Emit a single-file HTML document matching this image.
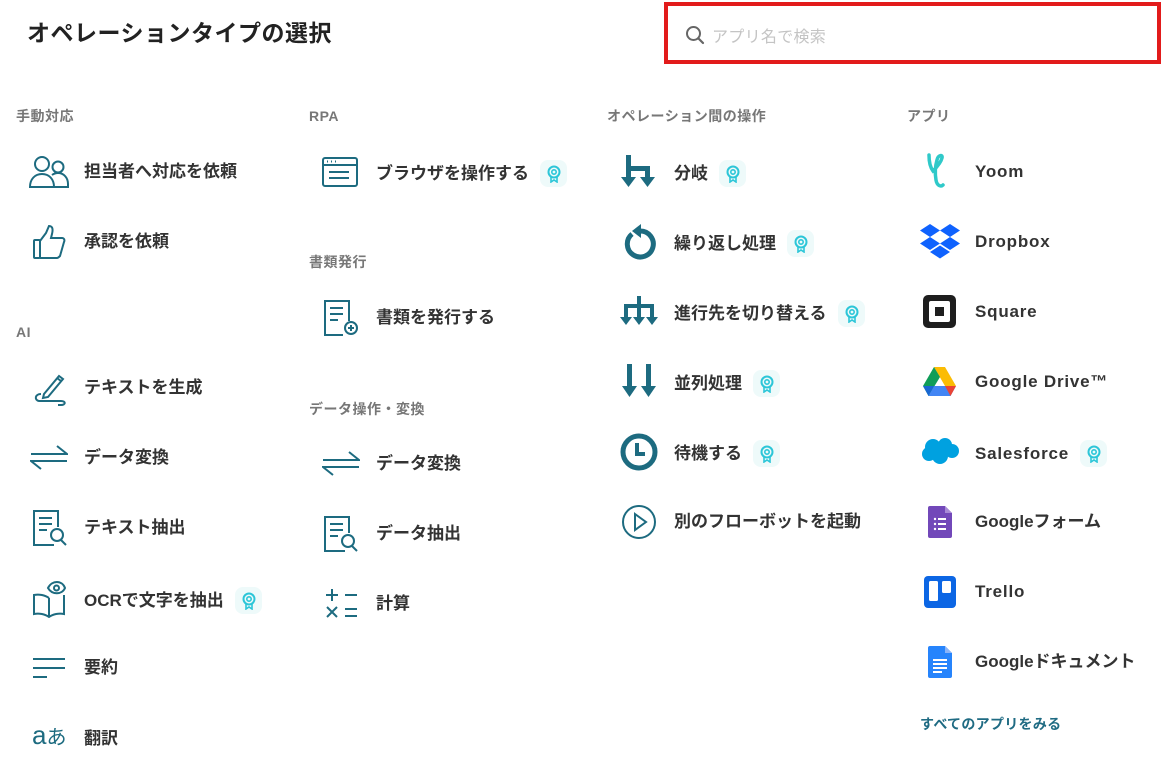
<!DOCTYPE html>
<html><head><meta charset="utf-8">
<style>
*{margin:0;padding:0;box-sizing:border-box}
body{width:1174px;height:772px;background:#fff;position:relative;overflow:hidden;font-family:"Liberation Sans","Noto Sans CJK JP",sans-serif;color:#333}
.t{position:absolute;left:27px;top:17px;font-size:23px;font-weight:bold;color:#222;line-height:32px;letter-spacing:0.5px}
.search{position:absolute;left:664px;top:2px;width:497px;height:62px;border:4px solid #e21b1b;background:#fff}
.search .ph{position:absolute;left:44px;top:17px;font-size:16px;color:#c4c4c4;letter-spacing:0.3px}
.h{position:absolute;font-size:14px;font-weight:bold;color:#777;letter-spacing:0.5px;line-height:20px}
.it{position:absolute;font-size:17px;font-weight:bold;color:#333;letter-spacing:0;line-height:24px;white-space:nowrap;display:flex;align-items:center}
.it.l{letter-spacing:0.8px}
.ic{position:absolute}
.b{display:inline-block;width:27px;height:27px;border-radius:8px;background:#eefafa;margin-left:11px;position:relative}
.b svg{position:absolute;left:6px;top:5px}
.lk{position:absolute;left:920px;top:714px;font-size:14px;font-weight:bold;color:#1f6b83;letter-spacing:0.3px}
</style></head><body>
<div class="t">オペレーションタイプの選択</div>
<div class="search">
<svg style="position:absolute;left:17px;top:19px" width="20" height="20" viewBox="0 0 20 20"><circle cx="8.5" cy="8.5" r="6.5" fill="none" stroke="#666" stroke-width="2"/><line x1="13.5" y1="13.5" x2="18" y2="18" stroke="#666" stroke-width="2.2" stroke-linecap="round"/></svg>
<div class="ph">アプリ名で検索</div></div>

<svg width="0" height="0" style="position:absolute"><defs>
<symbol id="bd" viewBox="0 0 16 18"><circle cx="8" cy="7" r="5.5" fill="none" stroke="#2cc6d8" stroke-width="2"/><circle cx="8" cy="7" r="2.2" fill="none" stroke="#2cc6d8" stroke-width="1.6"/><path d="M5 12v5l3-2 3 2v-5" fill="none" stroke="#2cc6d8" stroke-width="1.6"/></symbol>
</defs></svg>

<div class="h" style="left:16px;top:106px">手動対応</div>
<div class="h" style="left:16px;top:322px">AI</div>
<div class="h" style="left:309px;top:106px">RPA</div>
<div class="h" style="left:309px;top:252px">書類発行</div>
<div class="h" style="left:309px;top:399px">データ操作・変換</div>
<div class="h" style="left:607px;top:106px">オペレーション間の操作</div>
<div class="h" style="left:907px;top:106px">アプリ</div>

<svg class="ic" style="left:28px;top:153px" width="42" height="36" viewBox="0 0 42 36" fill="none" stroke="#1d6b80" stroke-width="2"><circle cx="14" cy="11" r="7"/><circle cx="30" cy="14" r="5.5"/><path d="M2 34c0-8 5-13 12-13s12 5 12 13z"/><path d="M24 22c2-1.5 4-2 6-2 6 0 10 5 10 11v3H26"/></svg>
<div class="it" style="left:84px;top:160px">担当者へ対応を依頼</div>
<svg class="ic" style="left:32px;top:224px" width="34" height="36" viewBox="0 0 34 36" fill="none" stroke="#1d6b80" stroke-width="2"><rect x="2" y="16" width="6" height="18" rx="1"/><path d="M8 17l6-8 3-7c4 0 4 4 3 8l-1 4h11c2 0 3 2 2 4l-4 14c-1 1-2 2-3 2H8"/></svg>
<div class="it" style="left:84px;top:230px">承認を依頼</div>

<svg class="ic" style="left:32px;top:370px" width="36" height="36" viewBox="0 0 36 36" fill="none" stroke="#1d6b80" stroke-width="2"><path d="M12 24L27 6l4 3-15 18-5 1z"/><path d="M25 8l4 3"/><path d="M9 24c-6 0-7 6-2 7h22c5 0 5 4 0 4h-3"/></svg>
<div class="it" style="left:84px;top:376px">テキストを生成</div>
<svg class="ic" style="left:30px;top:444px" width="38" height="28" viewBox="0 0 38 28" fill="none" stroke="#1d6b80" stroke-width="2"><path d="M1 10h36L27 2"/><path d="M37 17H1l10 8"/></svg>
<div class="it" style="left:84px;top:446px">データ変換</div>
<svg class="ic" style="left:32px;top:509px" width="36" height="38" viewBox="0 0 36 38" fill="none" stroke="#1d6b80" stroke-width="2"><path d="M22 36H2V2h24v16"/><path d="M7 9h13M7 15h13M7 21h8"/><circle cx="25" cy="26" r="6"/><path d="M29 31l5 5"/></svg>
<div class="it" style="left:84px;top:516px">テキスト抽出</div>
<svg class="ic" style="left:32px;top:580px" width="34" height="38" viewBox="0 0 34 38" fill="none" stroke="#1d6b80" stroke-width="2"><path d="M17 18c-4-3-10-4-15-3v19c5-1 11 0 15 3 4-3 10-4 15-3V15"/><path d="M17 18v19"/><path d="M16 8c4-8 14-8 17 0-3 7-13 7-17 0z"/><circle cx="24.5" cy="8" r="2.5"/></svg>
<div class="it" style="left:84px;top:587px">OCRで文字を抽出<span class="b"><svg width="16" height="18"><use href="#bd"/></svg></span></div>
<svg class="ic" style="left:32px;top:657px" width="34" height="22" viewBox="0 0 34 22" fill="none" stroke="#1d6b80" stroke-width="2"><path d="M1 2h32M1 11h32M1 20h14"/></svg>
<div class="it" style="left:84px;top:656px">要約</div>
<div class="ic" style="left:32px;top:720px;color:#1d6b80;font-size:26px;line-height:30px">a<span style="font-size:20px">あ</span></div>
<div class="it" style="left:84px;top:727px">翻訳</div>

<svg class="ic" style="left:322px;top:157px" width="36" height="30" viewBox="0 0 36 30" fill="none" stroke="#1d6b80" stroke-width="2"><rect x="1" y="1" width="34" height="28" rx="2"/><path d="M1 8h34M7 15h20M7 21h20"/><path d="M5 4.5h1M9 4.5h1M13 4.5h1"/></svg>
<div class="it" style="left:376px;top:160px">ブラウザを操作する<span class="b"><svg width="16" height="18"><use href="#bd"/></svg></span></div>
<svg class="ic" style="left:323px;top:299px" width="36" height="38" viewBox="0 0 36 38" fill="none" stroke="#1d6b80" stroke-width="2"><path d="M20 36H2V2h24v20"/><path d="M7 9h13M7 15h13M7 21h8"/><circle cx="28" cy="29" r="6"/><path d="M28 26v6M25 29h6"/></svg>
<div class="it" style="left:376px;top:306px">書類を発行する</div>
<svg class="ic" style="left:322px;top:450px" width="38" height="28" viewBox="0 0 38 28" fill="none" stroke="#1d6b80" stroke-width="2"><path d="M1 10h36L27 2"/><path d="M37 17H1l10 8"/></svg>
<div class="it" style="left:376px;top:452px">データ変換</div>
<svg class="ic" style="left:323px;top:515px" width="36" height="38" viewBox="0 0 36 38" fill="none" stroke="#1d6b80" stroke-width="2"><path d="M22 36H2V2h24v16"/><path d="M7 9h13M7 15h13M7 21h8"/><circle cx="25" cy="26" r="6"/><path d="M29 31l5 5"/></svg>
<div class="it" style="left:376px;top:522px">データ抽出</div>
<svg class="ic" style="left:325px;top:589px" width="34" height="30" viewBox="0 0 34 30" fill="none" stroke="#1d6b80" stroke-width="2"><path d="M1 6h12M7 0v12M20 6h12M2 18l10 10M12 18L2 28M20 20h12M20 27h12"/></svg>
<div class="it" style="left:376px;top:592px">計算</div>

<svg class="ic" style="left:621px;top:155px" width="36" height="34" viewBox="0 0 36 34" fill="#1d6b80"><rect x="5" y="0" width="5" height="24"/><rect x="5" y="11" width="22" height="5"/><rect x="24" y="11" width="5" height="13"/><path d="M0 22h15l-7.5 10zM19 22h15l-7.5 10z"/></svg>
<div class="it" style="left:674px;top:160px">分岐<span class="b"><svg width="16" height="18"><use href="#bd"/></svg></span></div>
<svg class="ic" style="left:622px;top:224px" width="34" height="36" viewBox="0 0 34 36" fill="none"><path d="M10 10a13 13 0 1 0 8-3" stroke="#1d6b80" stroke-width="5"/><path d="M19 0v14l-9-7z" fill="#1d6b80"/></svg>
<div class="it" style="left:674px;top:230px">繰り返し処理<span class="b"><svg width="16" height="18"><use href="#bd"/></svg></span></div>
<svg class="ic" style="left:620px;top:296px" width="38" height="34" viewBox="0 0 38 34" fill="#1d6b80"><rect x="17" y="0" width="4" height="10"/><rect x="4" y="8" width="30" height="4"/><rect x="4" y="8" width="4" height="14"/><rect x="17" y="8" width="4" height="14"/><rect x="30" y="8" width="4" height="14"/><path d="M0 21h12l-6 8zM13 21h12l-6 8zM26 21h12l-6 8z"/></svg>
<div class="it" style="left:674px;top:300px">進行先を切り替える<span class="b"><svg width="16" height="18"><use href="#bd"/></svg></span></div>
<svg class="ic" style="left:622px;top:364px" width="34" height="34" viewBox="0 0 34 34" fill="#1d6b80"><rect x="5" y="0" width="5" height="24"/><rect x="24" y="0" width="5" height="24"/><path d="M0 22h15l-7.5 11zM19 22h15l-7.5 11z"/></svg>
<div class="it" style="left:674px;top:370px">並列処理<span class="b"><svg width="16" height="18"><use href="#bd"/></svg></span></div>
<svg class="ic" style="left:620px;top:433px" width="38" height="38" viewBox="0 0 38 38" fill="none" stroke="#1d6b80"><circle cx="19" cy="19" r="16" stroke-width="5"/><path d="M17 10v11h8" stroke-width="4"/></svg>
<div class="it" style="left:674px;top:440px">待機する<span class="b"><svg width="16" height="18"><use href="#bd"/></svg></span></div>
<svg class="ic" style="left:621px;top:504px" width="36" height="36" viewBox="0 0 36 36" fill="none" stroke="#1d6b80" stroke-width="2"><circle cx="18" cy="18" r="16"/><path d="M14 10l11 8-11 8z"/></svg>
<div class="it" style="left:674px;top:510px">別のフローボットを起動</div>

<svg class="ic" style="left:926px;top:153px" width="30" height="38" viewBox="0 0 30 38" fill="none" stroke="#2fc9c9" stroke-width="3.5" stroke-linecap="round"><path d="M3 2c0 6 1 12 4 16 4-4 8-9 9-13 1-4-4-3-5 2-2 7-2 14-1 20 1 6 5 7 7 5"/></svg>
<div class="it l" style="left:975px;top:160px">Yoom</div>
<svg class="ic" style="left:920px;top:224px" width="40" height="37" viewBox="0 0 40 37" fill="#0f62fe"><path d="M10 0l10 6.5-10 6.5L0 6.5zM30 0l10 6.5-10 6.5-10-6.5zM0 19.5L10 13l10 6.5L10 26zM30 13l10 6.5L30 26l-10-6.5zM10 28l10-6.5 10 6.5-10 6.5z"/></svg>
<div class="it l" style="left:975px;top:230px">Dropbox</div>
<svg class="ic" style="left:923px;top:295px" width="33" height="33" viewBox="0 0 33 33"><rect x="0" y="0" width="33" height="33" rx="5" fill="#1e1e1e"/><rect x="6" y="6" width="21" height="21" rx="2" fill="#fff"/><rect x="12" y="12" width="9" height="9" fill="#1e1e1e"/></svg>
<div class="it l" style="left:975px;top:300px">Square</div>
<svg class="ic" style="left:923px;top:367px" width="33" height="30" viewBox="0 0 33 30"><path d="M11 0h11l11 19h-11z" fill="#fbbc04"/><path d="M11 0L0 19l5.5 10L17 10z" fill="#0f9d58"/><path d="M5.5 29h22L33 19H11z" fill="#4285f4"/><path d="M5.5 29L11 19H0z" fill="#1967d2"/><path d="M27.5 29L33 19H22z" fill="#ea4335"/></svg>
<div class="it l" style="left:975px;top:370px">Google Drive™</div>
<svg class="ic" style="left:921px;top:437px" width="38" height="28" viewBox="0 0 38 28" fill="#00a1e0"><circle cx="12" cy="10" r="8"/><circle cx="24" cy="8" r="7"/><circle cx="31" cy="14" r="7"/><circle cx="8" cy="17" r="7"/><circle cx="19" cy="19" r="8"/></svg>
<div class="it l" style="left:975px;top:440px">Salesforce<span class="b"><svg width="16" height="18"><use href="#bd"/></svg></span></div>
<svg class="ic" style="left:928px;top:506px" width="24" height="32" viewBox="0 0 24 32"><path d="M2 0h15l7 7v23a2 2 0 0 1-2 2H2a2 2 0 0 1-2-2V2a2 2 0 0 1 2-2z" fill="#7248b9"/><path d="M17 0v7h7z" fill="#a88ad6"/><g fill="#fff"><circle cx="7" cy="13" r="1.2"/><circle cx="7" cy="18" r="1.2"/><circle cx="7" cy="23" r="1.2"/><rect x="10" y="12" width="8" height="2"/><rect x="10" y="17" width="8" height="2"/><rect x="10" y="22" width="8" height="2"/></g></svg>
<div class="it" style="left:975px;top:510px">Googleフォーム</div>
<svg class="ic" style="left:924px;top:576px" width="32" height="32" viewBox="0 0 32 32"><rect width="32" height="32" rx="4" fill="#0c66e4"/><rect x="5" y="5" width="9" height="20" rx="1.5" fill="#fff"/><rect x="18" y="5" width="9" height="12" rx="1.5" fill="#fff"/></svg>
<div class="it l" style="left:975px;top:580px">Trello</div>
<svg class="ic" style="left:928px;top:646px" width="24" height="32" viewBox="0 0 24 32"><path d="M2 0h15l7 7v23a2 2 0 0 1-2 2H2a2 2 0 0 1-2-2V2a2 2 0 0 1 2-2z" fill="#2684fc"/><path d="M17 0v7h7z" fill="#8ab4f8"/><g fill="#fff"><rect x="5" y="13" width="14" height="2"/><rect x="5" y="17" width="14" height="2"/><rect x="5" y="21" width="14" height="2"/><rect x="5" y="25" width="9" height="2"/></g></svg>
<div class="it" style="left:975px;top:650px">Googleドキュメント</div>
<div class="lk">すべてのアプリをみる</div>
</body></html>
